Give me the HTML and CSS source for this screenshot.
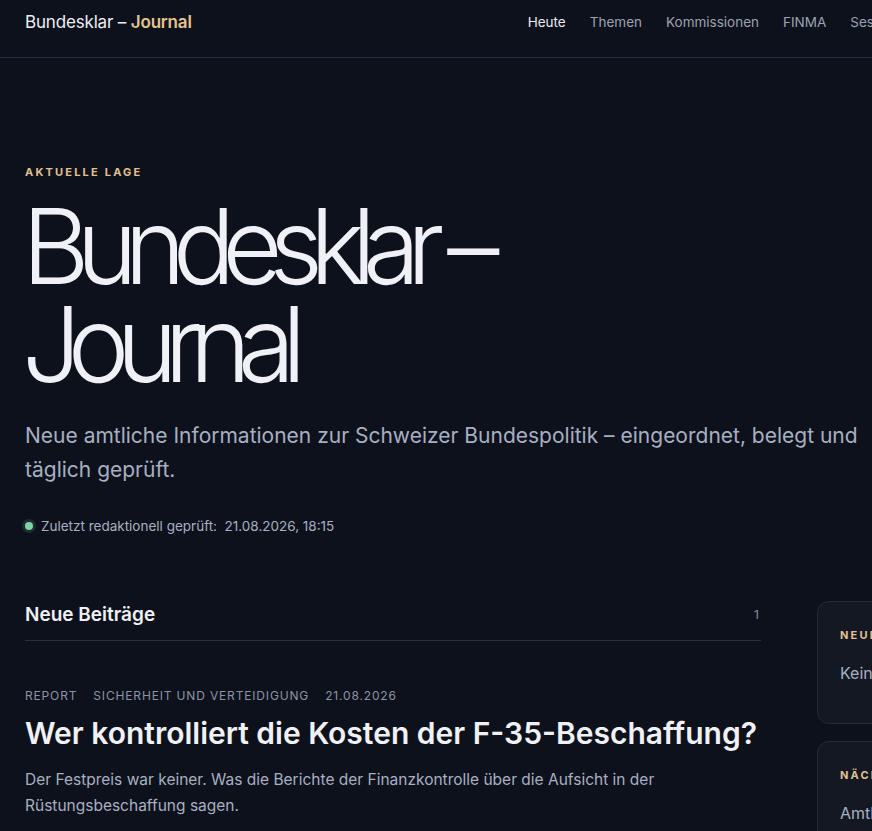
FILE: index.html
```html
<!DOCTYPE html>
<html lang="de">
<head>
<meta charset="utf-8">
<title>Bundesklar – Journal</title>
<link rel="stylesheet" href="styles.css">
</head>
<body>
<div class="page">
  <header class="topbar">
    <a class="brand" href="#">Bundesklar – <strong>Journal</strong></a>
    <nav class="nav">
      <a class="nav-link active" href="#">Heute</a>
      <a class="nav-link" href="#">Themen</a>
      <a class="nav-link" href="#">Kommissionen</a>
      <a class="nav-link" href="#">FINMA</a>
      <a class="nav-link" href="#">Sessionen</a>
      <a class="nav-link" href="#">Archiv</a>
    </nav>
  </header>

  <section class="hero">
    <p class="eyebrow">Aktuelle Lage</p>
    <h1 class="hero-title">Bundesklar –<br>Journal</h1>
    <p class="hero-lead">Neue amtliche Informationen zur Schweizer Bundespolitik – eingeordnet, belegt und täglich geprüft.</p>
    <p class="status"><span class="dot"></span>Zuletzt redaktionell geprüft:&nbsp; 21.08.2026, 18:15</p>
  </section>

  <div class="content">
    <main class="feed">
      <div class="feed-head">
        <h2 class="feed-title">Neue Beiträge</h2>
        <span class="feed-count">1</span>
      </div>
      <article class="post">
        <div class="post-meta">
          <span>Report</span>
          <span>Sicherheit und Verteidigung</span>
          <span>21.08.2026</span>
        </div>
        <h3 class="post-title">Wer kontrolliert die Kosten der F-35-Beschaffung?</h3>
        <p class="post-summary">Der Festpreis war keiner. Was die Berichte der Finanzkontrolle über die Aufsicht in der Rüstungsbeschaffung sagen.</p>
      </article>
    </main>
    <aside class="sidebar">
      <div class="card">
        <p class="card-label">Neue Dokumente</p>
        <p class="card-text">Keine neuen Dokumente.</p>
      </div>
      <div class="card">
        <p class="card-label">Nächste Termine</p>
        <p class="card-text">Amtliche Termine der kommenden Woche werden geladen.</p>
      </div>
    </aside>
  </div>
</div>
</body>
</html>
```

FILE: styles.css
```css
html, body {
  margin: 0;
  padding: 0;
  background: #0d111b;
  overflow-x: hidden;
}
body {
  font-family: Inter, "Noto Sans", sans-serif;
  color: #e8eaf0;
}
.page {
  width: 1160px;
}
a { text-decoration: none; color: inherit; }
p, h1, h2, h3 { margin: 0; }

.topbar {
  display: flex;
  align-items: flex-start;
  justify-content: space-between;
  width: 1006px;
  height: 58px;
  padding: 12px 25px 0;
  border-bottom: 1px solid #232838;
  box-sizing: border-box;
}
.brand {
  font-size: 17px;
  line-height: 20px;
  color: #eceef3;
  letter-spacing: -0.01em;
}
.brand strong {
  color: #e5c391;
  font-weight: 600;
}
.nav {
  display: flex;
  gap: 24px;
  padding-top: 2px;
}
.nav-link {
  font-size: 13.5px;
  line-height: 17px;
  color: #9ba3b4;
}
.nav-link.active { color: #e8eaf0; }

.hero {
  padding: 107px 25px 0;
}
.eyebrow {
  font-size: 11px;
  font-weight: 700;
  letter-spacing: 0.2em;
  text-transform: uppercase;
  color: #e2c191;
}
.hero-title {
  margin-top: 18px;
  margin-left: -3px;
  font-size: 104px;
  line-height: 98px;
  font-weight: 300;
  letter-spacing: -0.126em;
  color: #f0f1f6;
}
.hero-lead {
  margin-top: 26px;
  max-width: 840px;
  font-size: 21px;
  line-height: 34px;
  color: #a7b0c2;
}
.status {
  margin-top: 31px;
  display: flex;
  align-items: center;
  gap: 8px;
  font-size: 13.5px;
  color: #a7b0c2;
}
.dot {
  flex: none;
  width: 8px;
  height: 8px;
  border-radius: 50%;
  background: #7fd3a8;
  box-shadow: 0 0 0 3px rgba(127, 211, 168, 0.14);
}

.content {
  display: grid;
  grid-template-columns: 736px 300px;
  gap: 56px;
  padding: 67px 25px 0;
  align-items: start;
}
.feed-head {
  display: flex;
  justify-content: space-between;
  align-items: center;
  padding-top: 2px;
  padding-bottom: 14px;
  border-bottom: 1px solid #2a2f3c;
}
.feed-title {
  font-size: 19px;
  font-weight: 600;
  color: #eef0f5;
}
.feed-count {
  font-size: 12px;
  color: #8a93a5;
  padding-right: 2px;
}
.post {
  padding-top: 47px;
}
.post-meta {
  display: flex;
  gap: 16px;
  font-size: 12px;
  letter-spacing: 0.07em;
  text-transform: uppercase;
  color: #8b94a7;
}
.post-title {
  margin-top: 12px;
  font-size: 30px;
  line-height: 1.25;
  font-weight: 600;
  color: #f0f1f6;
}
.post-summary {
  margin-top: 14px;
  font-size: 15.5px;
  line-height: 26px;
  color: #a7b0c2;
}

.sidebar {
  display: flex;
  flex-direction: column;
  gap: 17px;
}
.card {
  background: #131823;
  border: 1px solid #262b38;
  border-radius: 12px;
  padding: 26px 22px 37px;
}
.card-label {
  font-size: 11px;
  font-weight: 700;
  letter-spacing: 0.2em;
  text-transform: uppercase;
  color: #e2c191;
}
.card-text {
  margin-top: 18px;
  font-size: 16px;
  line-height: 26px;
  color: #a7b0c2;
}
```
